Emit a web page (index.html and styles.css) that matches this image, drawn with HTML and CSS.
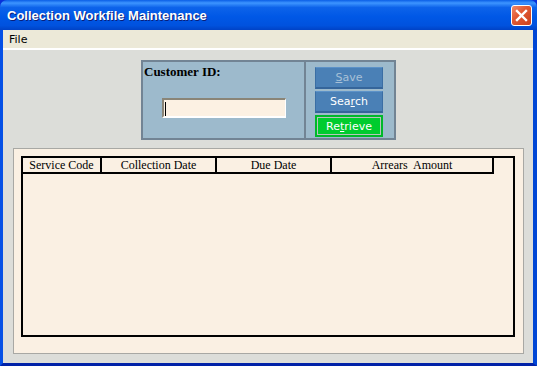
FILE: index.html
```html
<!DOCTYPE html>
<html lang="en">
<head>
    <meta charset="UTF-8">
    <title>Collection Workfile Maintenance</title>
    <link rel="stylesheet" href="styles.css">
</head>
<body>
    <div class="window">
        <div class="titlebar">
            <span class="title">Collection Workfile Maintenance</span>
            <button class="close-button">
                <svg width="13" height="13" viewBox="0 0 13 13">
                    <path d="M2 2 L11 11 M11 2 L2 11" stroke="#fff" stroke-width="2.4" stroke-linecap="square"/>
                </svg>
            </button>
        </div>
        <div class="frame">
            <div class="menubar">
                <span class="menu-item">File</span>
            </div>
            <div class="client">
                <div class="customer-panel">
                    <div class="customer-box">
                        <label class="customer-label">Customer ID:</label>
                        <div class="customer-input"><span class="caret"></span></div>
                    </div>
                    <div class="action-box">
                        <button class="action-button disabled"><u>S</u>ave</button>
                        <button class="action-button">Sea<u>r</u>ch</button>
                        <button class="action-button retrieve">Re<u>t</u>rieve</button>
                    </div>
                </div>
                <div class="grid-panel">
                    <div class="grid">
                        <div class="grid-header">
                            <div class="col col-code">Service Code</div>
                            <div class="col col-date">Collection Date</div>
                            <div class="col col-date">Due Date</div>
                            <div class="col col-amount">Arrears&nbsp; Amount</div>
                        </div>
                    </div>
                </div>
            </div>
        </div>
    </div>
</body>
</html>
```

FILE: styles.css
```css
body {
    margin: 0;
    padding: 0;
    background-color: #0046c8;
}

.window {
    width: 537px;
    height: 366px;
    display: flex;
    flex-direction: column;
    background-color: #0831d9;
}

.titlebar {
    height: 30px;
    display: flex;
    align-items: center;
    justify-content: space-between;
    padding: 0 5px 0 7px;
    box-sizing: border-box;
    border-radius: 7px 7px 0 0;
    background: linear-gradient(to bottom, #0a5ee6 0%, #3d95ff 10%, #0d63ea 25%, #0058e6 55%, #0052de 85%, #0042c6 100%);
}

.title {
    font-family: "Liberation Sans", sans-serif;
    font-size: 13px;
    font-weight: bold;
    color: #fff;
    text-shadow: 1px 1px 0 #0a1e78;
    margin-top: 1px;
}

.close-button {
    width: 21px;
    height: 21px;
    padding: 0;
    border: 1px solid #fff;
    border-radius: 3px;
    background: linear-gradient(135deg, #f08a6a 0%, #e25a34 40%, #c8401c 100%);
    display: flex;
    align-items: center;
    justify-content: center;
    margin-top: 1px;
}

.frame {
    flex: 1;
    display: flex;
    flex-direction: column;
    border-left: 3px solid #0550e6;
    border-right: 4px solid #0046d5;
    border-bottom: 3px solid #0021a8;
}

.menubar {
    height: 18px;
    background-color: #ece9d8;
    border-bottom: 2px solid #fff;
    display: flex;
    align-items: center;
    padding-left: 6px;
}

.menu-item {
    font-family: "DejaVu Sans", sans-serif;
    font-size: 11px;
    color: #000;
}

.client {
    flex: 1;
    background-color: #dcddd9;
    display: flex;
    flex-direction: column;
    padding: 10px 9px 9px 10px;
    gap: 8px;
}

.customer-panel {
    display: flex;
    margin-left: 128px;
    width: 255px;
    height: 80px;
    box-sizing: border-box;
    background-color: #9dbacc;
    border: 2px solid #728494;
}

.customer-box {
    width: 163px;
    border-right: 2px solid #728494;
    padding: 2px 0 0 1px;
    box-sizing: border-box;
}

.customer-label {
    font-family: "Liberation Serif", serif;
    font-size: 13px;
    font-weight: bold;
    color: #000;
    display: block;
}

.customer-input {
    margin: 18px 0 0 18px;
    width: 124px;
    height: 20px;
    box-sizing: border-box;
    background-color: #fcf1e3;
    border-top: 2px solid #8a8577;
    border-left: 2px solid #8a8577;
    border-right: 1px solid #fff;
    border-bottom: 2px solid #fff;
    padding: 2px 0 0 1px;
}

.caret {
    display: block;
    width: 1px;
    height: 14px;
    background-color: #000;
}

.action-box {
    flex: 1;
    display: flex;
    flex-direction: column;
    gap: 2px;
    padding: 5px 0 0 9px;
}

.action-button {
    width: 68px;
    height: 22px;
    padding: 0;
    font-family: "DejaVu Sans", sans-serif;
    font-size: 11px;
    color: #fff;
    background-color: #4a80b6;
    border: 1px solid #3a6ea4;
    border-top-color: #5c92c8;
    border-bottom: 2px solid #35659a;
}

.action-button u {
    text-decoration-thickness: 1px;
}

.action-button.disabled {
    color: #a8c0d6;
}

.action-button.retrieve {
    background-color: #00cc2e;
    border: 2px solid #00b82a;
    box-shadow: inset 0 0 0 1px #b8c4bc;
}

.grid-panel {
    flex: 1;
    background-color: #faf0e3;
    border: 1px solid #a8a8a4;
    padding: 7px 8px 16px 7px;
    display: flex;
}

.grid {
    flex: 1;
    border: 2px solid #000;
}

.grid-header {
    display: flex;
    width: 469px;
    height: 14px;
    border-bottom: 2px solid #000;
    border-right: 2px solid #000;
}

.col {
    font-family: "Liberation Serif", serif;
    font-size: 12px;
    color: #000;
    text-align: center;
    line-height: 14px;
    border-right: 2px solid #000;
    box-sizing: border-box;
}

.col:last-child {
    border-right: none;
}

.col-code {
    width: 79px;
}

.col-date {
    width: 115px;
}

.col-amount {
    flex: 1;
}
```
